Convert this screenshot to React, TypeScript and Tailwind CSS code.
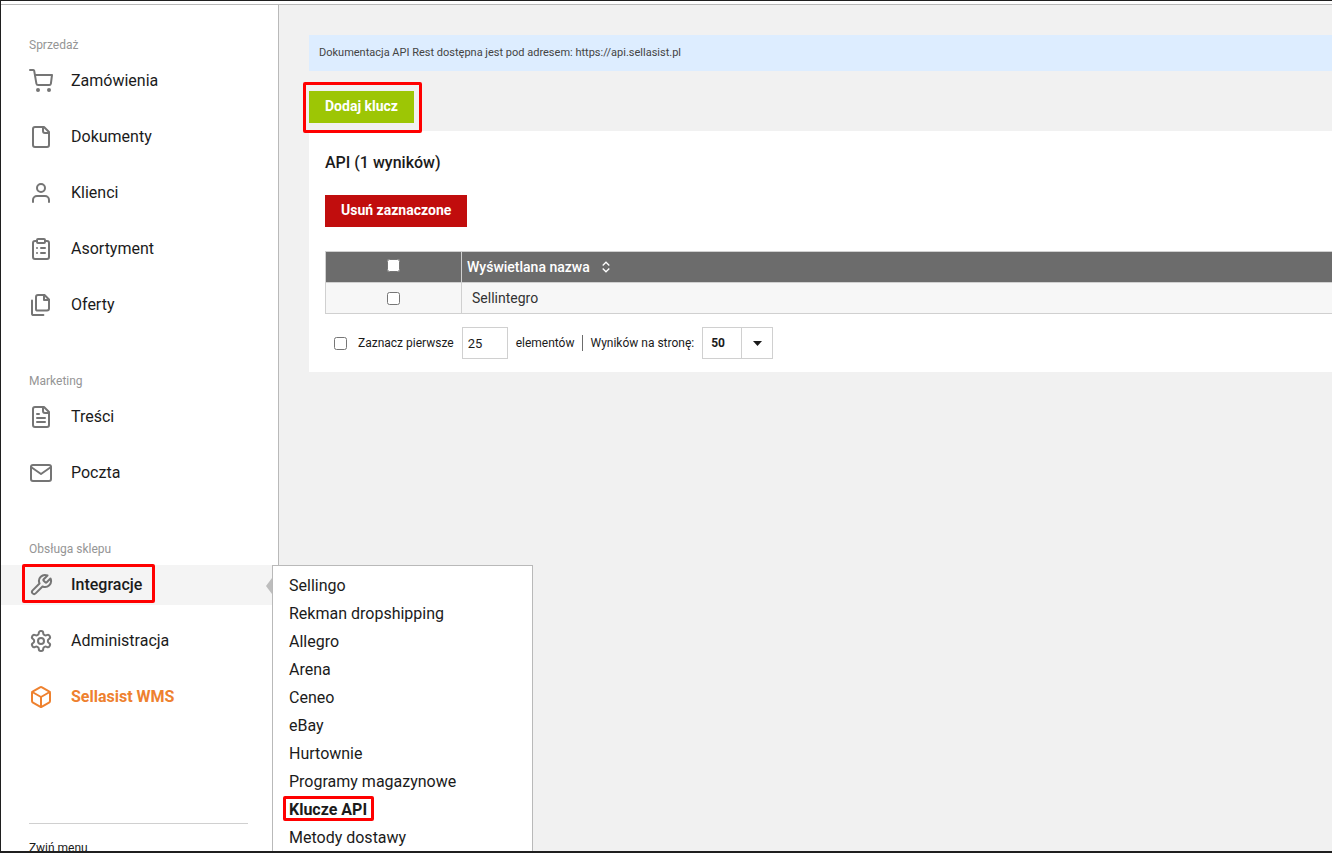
import type { ReactNode } from 'react';

interface IMenuItem {
  label: string;
  icon: ReactNode;
  tone?: 'active' | 'brand';
}

interface IMenuSection {
  title: string;
  items: IMenuItem[];
}

function Icon({ children }: { children: ReactNode }) {
  return (
    <svg
      className="size-6 shrink-0"
      viewBox="0 0 24 24"
      fill="none"
      stroke="currentColor"
      strokeWidth="2"
      strokeLinecap="round"
      strokeLinejoin="round"
      aria-hidden="true"
    >
      {children}
    </svg>
  );
}

const sections: IMenuSection[] = [
  {
    title: 'Sprzedaż',
    items: [
      {
        label: 'Zamówienia',
        icon: (
          <>
            <circle cx="9" cy="21" r="1" />
            <circle cx="20" cy="21" r="1" />
            <path d="M1 1h3.2a1 1 0 0 1 1 .8L7.4 14.6a1.8 1.8 0 0 0 1.8 1.5h11a1.8 1.8 0 0 0 1.7-1.5L23 6H6" />
          </>
        ),
      },
      {
        label: 'Dokumenty',
        icon: (
          <>
            <path d="M15 2H6a2 2 0 0 0-2 2v16a2 2 0 0 0 2 2h12a2 2 0 0 0 2-2V7Z" />
            <path d="M14 2v4a2 2 0 0 0 2 2h4" />
          </>
        ),
      },
      {
        label: 'Klienci',
        icon: (
          <>
            <path d="M20 21v-2a4 4 0 0 0-4-4H8a4 4 0 0 0-4 4v2" />
            <circle cx="12" cy="7" r="4" />
          </>
        ),
      },
      {
        label: 'Asortyment',
        icon: (
          <>
            <rect x="8" y="2" width="8" height="4" rx="1" />
            <path d="M16 4h2a2 2 0 0 1 2 2v14a2 2 0 0 1-2 2H6a2 2 0 0 1-2-2V6a2 2 0 0 1 2-2h2" />
            <path d="M12 11h4M12 16h4M8 11h.01M8 16h.01" />
          </>
        ),
      },
      {
        label: 'Oferty',
        icon: (
          <>
            <path d="M15.5 2H9a2 2 0 0 0-2 2v12a1.6 1.6 0 0 0 1.6 1.6H18a2 2 0 0 0 2-2V6.5Z" />
            <path d="M15 2v5h5" />
            <path d="M3 7.6v12.8A1.6 1.6 0 0 0 4.6 22h9.8" />
          </>
        ),
      },
    ],
  },
  {
    title: 'Marketing',
    items: [
      {
        label: 'Treści',
        icon: (
          <>
            <path d="M15 2H6a2 2 0 0 0-2 2v16a2 2 0 0 0 2 2h12a2 2 0 0 0 2-2V7Z" />
            <path d="M14 2v4a2 2 0 0 0 2 2h4" />
            <path d="M10 9H8M16 13H8M16 17H8" />
          </>
        ),
      },
      {
        label: 'Poczta',
        icon: (
          <>
            <rect x="2" y="4" width="20" height="16" rx="2" />
            <path d="m22 6-10 7L2 6" />
          </>
        ),
      },
    ],
  },
  {
    title: 'Obsługa sklepu',
    items: [
      {
        label: 'Integracje',
        tone: 'active',
        icon: (
          <path d="M14.7 6.3a1 1 0 0 0 0 1.4l1.6 1.6a1 1 0 0 0 1.4 0l3.77-3.77a6 6 0 0 1-7.94 7.94l-6.91 6.91a2.12 2.12 0 0 1-3-3l6.91-6.91a6 6 0 0 1 7.94-7.94l-3.76 3.76z" />
        ),
      },
      {
        label: 'Administracja',
        icon: (
          <>
            <path d="M12.22 2h-.44a2 2 0 0 0-2 2v.18a2 2 0 0 1-1 1.73l-.43.25a2 2 0 0 1-2 0l-.15-.08a2 2 0 0 0-2.73.73l-.22.38a2 2 0 0 0 .73 2.73l.15.1a2 2 0 0 1 1 1.72v.51a2 2 0 0 1-1 1.74l-.15.09a2 2 0 0 0-.73 2.73l.22.38a2 2 0 0 0 2.73.73l.15-.08a2 2 0 0 1 2 0l.43.25a2 2 0 0 1 1 1.73V20a2 2 0 0 0 2 2h.44a2 2 0 0 0 2-2v-.18a2 2 0 0 1 1-1.73l.43-.25a2 2 0 0 1 2 0l.15.08a2 2 0 0 0 2.73-.73l.22-.39a2 2 0 0 0-.73-2.73l-.15-.08a2 2 0 0 1-1-1.74v-.5a2 2 0 0 1 1-1.74l.15-.09a2 2 0 0 0 .73-2.73l-.22-.38a2 2 0 0 0-2.73-.73l-.15.08a2 2 0 0 1-2 0l-.43-.25a2 2 0 0 1-1-1.73V4a2 2 0 0 0-2-2z" />
            <circle cx="12" cy="12" r="3" />
          </>
        ),
      },
      {
        label: 'Sellasist WMS',
        tone: 'brand',
        icon: (
          <>
            <path d="M21 8a2 2 0 0 0-1-1.73l-7-4a2 2 0 0 0-2 0l-7 4A2 2 0 0 0 3 8v8a2 2 0 0 0 1 1.73l7 4a2 2 0 0 0 2 0l7-4A2 2 0 0 0 21 16Z" />
            <path d="m3.3 7 8.7 5 8.7-5M12 22V12" />
          </>
        ),
      },
    ],
  },
];

const integrations = [
  'Sellingo',
  'Rekman dropshipping',
  'Allegro',
  'Arena',
  'Ceneo',
  'eBay',
  'Hurtownie',
  'Programy magazynowe',
  'Klucze API',
  'Metody dostawy',
];

function Submenu() {
  return (
    <div className="absolute top-0 left-[271px] z-10 w-[261px] border border-[#b9b9b9] bg-white py-1.5 pl-4">
      <span className="absolute top-3 -left-[7px] h-4 w-1.5 bg-[#bdbdbd] [clip-path:polygon(100%_0,100%_100%,0_50%)]" />
      <ul>
        {integrations.map((name) => (
          <li key={name} className="h-7 leading-7">
            {name === 'Klucze API' ? (
              <a href="#" className="relative font-bold">
                {name}
                <span className="absolute -top-1 -right-[7px] -bottom-0.5 -left-1.5 rounded-xs border-3 border-[#ff0000]" />
              </a>
            ) : (
              <a href="#">{name}</a>
            )}
          </li>
        ))}
      </ul>
    </div>
  );
}

function MenuRow({ item }: { item: IMenuItem }) {
  if (item.tone === 'active') {
    return (
      <li className="relative bg-[#f4f4f4]">
        <a href="#" className="flex h-10 items-center gap-[18px] px-7 font-medium">
          <span className="text-[#757575]">
            <Icon>{item.icon}</Icon>
          </span>
          {item.label}
        </a>
        <span className="pointer-events-none absolute -top-px left-[21px] h-[39px] w-[133px] rounded-xs border-3 border-[#ff0000]" />
        <Submenu />
      </li>
    );
  }
  if (item.tone === 'brand') {
    return (
      <li>
        <a href="#" className="flex h-10 items-center gap-[18px] px-7 font-bold text-[#ee812f]">
          <Icon>{item.icon}</Icon>
          {item.label}
        </a>
      </li>
    );
  }
  return (
    <li>
      <a href="#" className="flex h-10 items-center gap-[18px] px-7">
        <span className="text-[#757575]">
          <Icon>{item.icon}</Icon>
        </span>
        {item.label}
      </a>
    </li>
  );
}

function Sidebar() {
  return (
    <nav className="w-[278px] shrink-0 border-r border-[#b9b9b9] bg-white pt-7">
      <div className="flex flex-col gap-11">
        {sections.map((section) => (
          <section key={section.title}>
            <h2 className="mb-1 px-7 text-xs leading-6 text-[#959595]">{section.title}</h2>
            <ul className="flex flex-col gap-4">
              {section.items.map((item) => (
                <MenuRow key={item.label} item={item} />
              ))}
            </ul>
          </section>
        ))}
      </div>
      <div className="mt-[106px] mr-[30px] ml-7 border-t border-[#d0d0d0] pt-4">
        <button className="block text-xs">Zwiń menu</button>
      </div>
    </nav>
  );
}

function KeysTable() {
  return (
    <table className="mt-6 w-full border-collapse text-left text-sm">
      <thead>
        <tr className="h-[31px] bg-[#6c6c6c] text-white">
          <th className="w-[136px] border border-[#d0d0d0] pb-1 text-center">
            <input type="checkbox" aria-label="Zaznacz wszystkie" className="mx-auto block size-[13px]" />
          </th>
          <th className="border-y border-[#d0d0d0] pl-[5px] font-medium">
            <button className="flex items-center gap-3">
              Wyświetlana nazwa
              <svg className="h-3 w-2" viewBox="0 0 8 12" fill="none" stroke="currentColor" strokeWidth="1.3" aria-hidden="true">
                <path d="M.7 4.5 4 1.2l3.3 3.3M.7 7.5 4 10.8l3.3-3.3" />
              </svg>
            </button>
          </th>
        </tr>
      </thead>
      <tbody>
        <tr className="h-[31px] bg-[#f7f7f7]">
          <td className="border border-[#d0d0d0]">
            <input type="checkbox" aria-label="Zaznacz Sellintegro" className="mx-auto block size-[13px]" />
          </td>
          <td className="border-y border-[#d0d0d0] pl-2.5 text-[#333]">Sellintegro</td>
        </tr>
      </tbody>
    </table>
  );
}

function Pager() {
  return (
    <div className="mt-[13px] flex items-center pl-[9px] text-xs">
      <input id="first" type="checkbox" className="size-[13px]" />
      <label htmlFor="first" className="ml-[11px]">
        Zaznacz pierwsze
      </label>
      <input
        type="text"
        defaultValue="25"
        aria-label="Liczba elementów"
        className="mx-2 h-8 w-[46px] border border-[#d0d0d0] bg-white px-[5px] text-[13px]"
      />
      <span>elementów</span>
      <span className="mr-[7px] ml-2 h-4 w-px bg-[#6c6c6c]" />
      <label htmlFor="per-page">Wyników na stronę:</label>
      <div className="relative ml-2 h-8 w-[71px]">
        <select
          id="per-page"
          defaultValue="50"
          className="h-full w-full appearance-none border border-[#d0d0d0] bg-white pl-2 font-bold"
        >
          <option>50</option>
          <option>100</option>
        </select>
        <span className="pointer-events-none absolute inset-y-0 right-0 flex w-8 items-center border-l border-[#d0d0d0] pl-[11px]">
          <svg className="h-[5px] w-[9px]" viewBox="0 0 9 5" fill="currentColor" aria-hidden="true">
            <path d="M0 0h9L4.5 5z" />
          </svg>
        </span>
      </div>
    </div>
  );
}

export default function App() {
  return (
    <div className="flex h-screen flex-col overflow-hidden border-t border-b-2 border-l border-[#1f1f1f] bg-white font-['Roboto',sans-serif] text-base text-[#1b1b1b]">
      <div className="h-1 shrink-0 border-b border-[#b9b9b9]" />
      <div className="flex min-h-0 flex-1">
        <Sidebar />
        <main className="min-w-0 flex-1 bg-[#f1f1f1] pt-[30px] pl-[30px]">
          <p className="bg-[#ddedff] px-2.5 text-[11px] leading-9 text-[#444]">
            Dokumentacja API Rest dostępna jest pod adresem: https://api.sellasist.pl
          </p>
          <div className="mt-5 flex">
            <div className="relative">
              <button className="block h-8 bg-[#9dc605] px-4 pb-0.5 text-sm font-bold text-white">Dodaj klucz</button>
              <span className="pointer-events-none absolute -top-[9px] -right-2 -bottom-2.5 -left-1.5 rounded-xs border-3 border-[#ff0000]" />
            </div>
          </div>
          <section className="mt-2 bg-white pt-5 pb-[13px] pl-4">
            <h1 className="mb-5 font-medium">API (1 wyników)</h1>
            <button className="block h-8 bg-[#c10d0d] px-4 pb-0.5 text-sm font-bold text-white">Usuń zaznaczone</button>
            <KeysTable />
            <Pager />
          </section>
        </main>
      </div>
    </div>
  );
}
